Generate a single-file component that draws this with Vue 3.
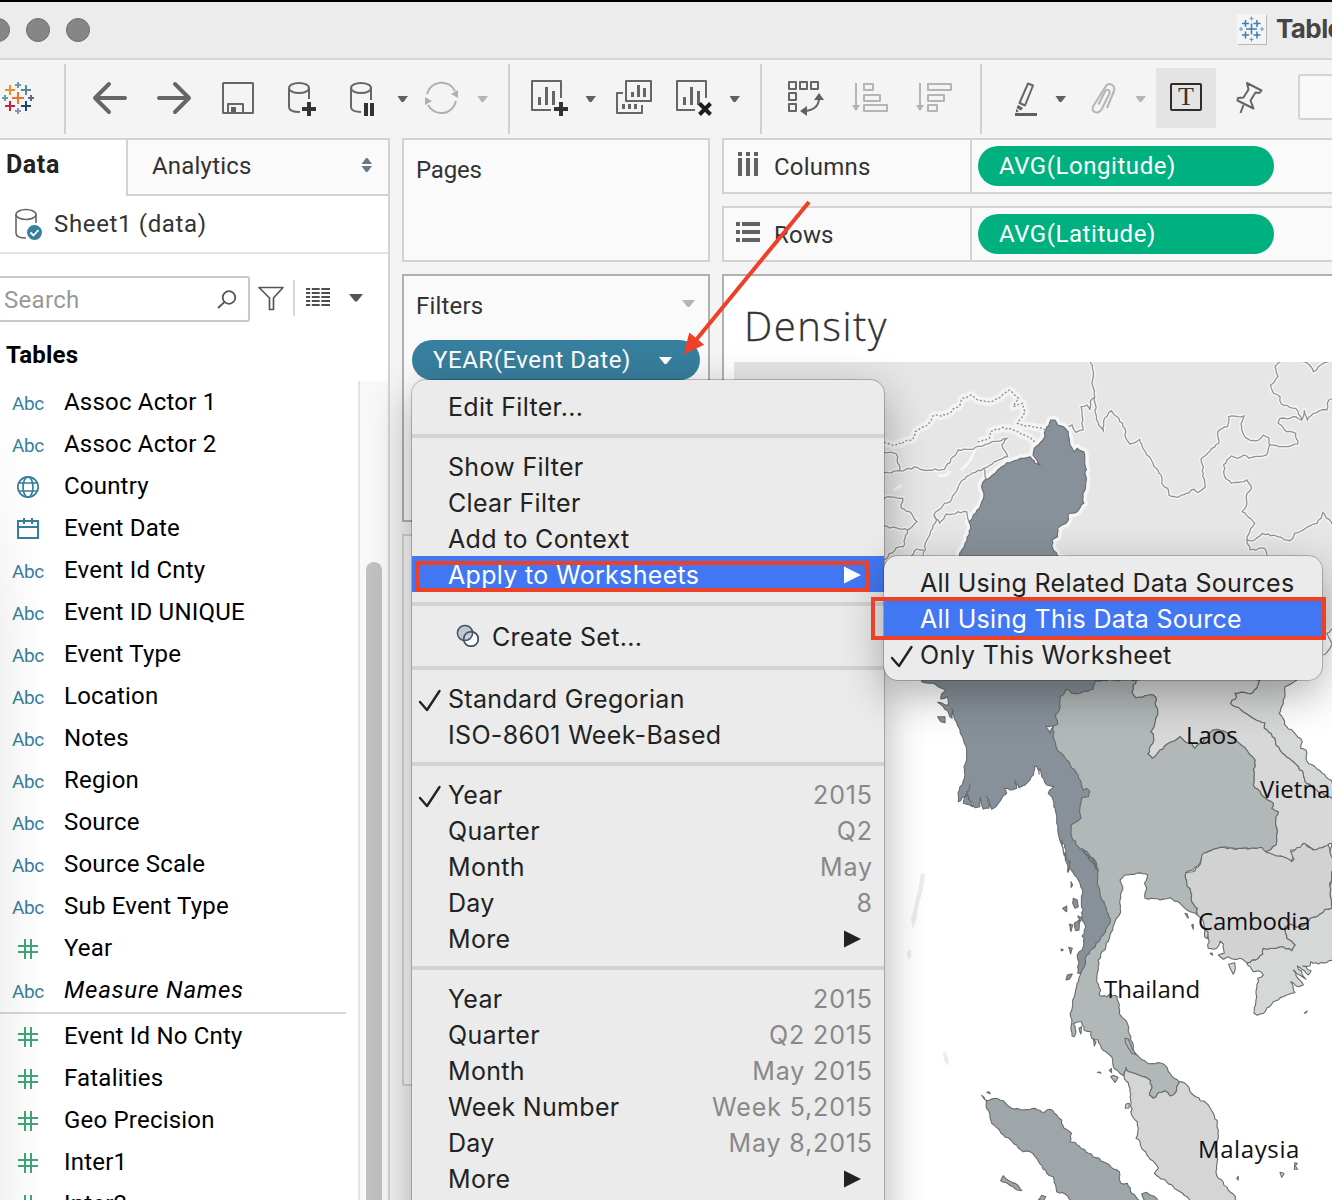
<script setup>
const fields = [
  ['abc', 'Assoc Actor 1'], ['abc', 'Assoc Actor 2'], ['globe', 'Country'], ['date', 'Event Date'],
  ['abc', 'Event Id Cnty'], ['abc', 'Event ID UNIQUE'], ['abc', 'Event Type'], ['abc', 'Location'],
  ['abc', 'Notes'], ['abc', 'Region'], ['abc', 'Source'], ['abc', 'Source Scale'],
  ['abc', 'Sub Event Type'], ['num', 'Year'], ['abc', 'Measure Names'],
  ['sep', ''],
  ['num', 'Event Id No Cnty'], ['num', 'Fatalities'], ['num', 'Geo Precision'], ['num', 'Inter1'], ['num', 'Inter2'],
]

const menu = [
  { t: 'Edit Filter...' }, { sep: true },
  { t: 'Show Filter' }, { t: 'Clear Filter' }, { t: 'Add to Context' }, { t: 'Apply to Worksheets', more: true, on: true },
  { sep: true }, { t: 'Create Set...', set: true }, { sep: true },
  { t: 'Standard Gregorian', check: true }, { t: 'ISO-8601 Week-Based' }, { sep: true },
  { t: 'Year', v: '2015', check: true }, { t: 'Quarter', v: 'Q2' }, { t: 'Month', v: 'May' }, { t: 'Day', v: '8' }, { t: 'More', more: true },
  { sep: true },
  { t: 'Year', v: '2015' }, { t: 'Quarter', v: 'Q2 2015' }, { t: 'Month', v: 'May 2015' },
  { t: 'Week Number', v: 'Week 5,2015' }, { t: 'Day', v: 'May 8,2015' }, { t: 'More', more: true },
]
const submenu = [
  { t: 'All Using Related Data Sources' },
  { t: 'All Using This Data Source', on: true },
  { t: 'Only This Worksheet', check: true },
]

// Survey sheets: each has its own origin and scale, projected to the window grid.
const sheet = (ox, oy, sx, sy) => (s) =>
  s.trim().split(/\s+/).map((p) => p.split(',').map(Number)).map(([x, y]) => [ox + x / sx, oy + y / sy])
const N = sheet(720, 200, 2.562, 3)
const M = sheet(870, 530, 3, 3)
const S = sheet(880, 840, 3, 3)

// Roughens a polyline so that coasts and borders look natural.
const noise = (x, y) => {
  const v = Math.sin(x * 12.9898 + y * 78.233) * 43758.5453
  return (v - Math.floor(v)) * 2 - 1
}
const rough = (pts, closed, amp = 0.13) => {
  const src = closed ? [...pts, pts[0]] : pts
  let d = `M${src[0][0].toFixed(1)} ${src[0][1].toFixed(1)}`
  for (let i = 1; i < src.length; i++) {
    let [a, b] = [src[i - 1], src[i]]
    const flip = a[0] > b[0] || (a[0] === b[0] && a[1] > b[1])
    const [p, q] = flip ? [b, a] : [a, b]
    const len = Math.hypot(q[0] - p[0], q[1] - p[1])
    const n = Math.max(1, Math.round(len / 3))
    const mids = []
    for (let k = 1; k < n; k++) {
      const x = p[0] + ((q[0] - p[0]) * k) / n
      const y = p[1] + ((q[1] - p[1]) * k) / n
      const w = noise(Math.round(x), Math.round(y)) * Math.min(1, len * amp)
      mids.push([x - ((q[1] - p[1]) / len) * w, y + ((q[0] - p[0]) / len) * w])
    }
    if (flip) mids.reverse()
    for (const m of [...mids, b]) d += `L${m[0].toFixed(1)} ${m[1].toFixed(1)}`
  }
  return closed ? d + 'Z' : d
}

const thaiLaos = '798,450 785,485 797,503 825,497 850,495 858,503 855,520 863,545 852,590 842,605 850,612 848,640 833,672 847,685 870,660 905,635 915,632 930,620 955,640 965,640 975,655 1000,635 1030,600 1060,603 1090,620 1110,642 1130,660 1155,690 1150,765 1180,800 1210,820 1205,835 1225,845 1217,870 1222,900 1218,945 1185,968'
const laosViet = '1400,1000 1375,980 1386,940 1345,960 1330,958 1300,940 1290,955 1262,960 1270,985 1262,997 1240,982 1200,975 1185,968'
const laosVietN = '1170,450 1160,475 1140,492 1118,487 1095,490 1100,500 1082,520 1120,545 1145,562 1185,578 1183,595 1215,625 1218,645 1245,675 1280,705 1300,730 1305,755 1340,780 1400,812'

const thailand = [
  ...M('590,440 675,450'), ...M(thaiLaos),
  ...M('1172,955 1150,955 1120,957 1095,955 1050,952 1005,968 990,1000 970,1020'),
  ...S('938,90 918,98 920,130 932,155 935,185 952,205 952,225 930,215 915,205 900,190 870,173 840,180 815,175 795,175 800,145 793,130 803,105 770,100 735,105 720,120 728,140 720,180 722,215 705,245 690,285 678,320 655,360 655,390 650,425 662,450 658,465 680,470 690,462 712,470 718,520 740,545 752,600 765,640 800,668 850,672 870,700 898,725 885,760 870,768 855,752 835,758 820,775 808,765 815,745 812,722 790,710 770,703 745,695 738,683 732,708 700,680 695,650 668,630 655,600 635,595 633,575 612,570 605,545 580,552 588,575 582,590 576,588 572,530 578,480 590,440 602,400 605,340 650,250 620,100 570,20'),
  ...M('590,900 580,780 540,650 560,500'),
]
const myanmar = [
  ...N('613,1067 628,1030 643,985 638,965 655,940 668,915 676,880 670,860 678,840 705,820 722,800 735,788 770,775 795,770 807,790 820,795 812,780 802,765 805,745 830,715 835,690 847,660 858,660 865,675 880,680 892,695 897,735 908,755 915,745 932,755 936,800 937,850 930,880 932,910 915,935 895,940 890,965 865,985 865,1010 850,1020 852,1045 864,1067'),
  ...M('600,100 690,300 705,450 675,452 670,478 630,490 605,490 588,478 583,490 570,500 568,540 556,555 563,583 545,588 528,588 540,610 550,590 550,615 560,655 590,690 625,735 630,750 640,780 650,775 660,785 655,800 635,803 630,830 633,865 620,875 603,885 605,920 625,950 640,965 665,985 682,1020'),
  ...S('605,25 640,55 655,90 652,130 662,170 672,185 680,215 691,245 670,285 640,325 620,345 615,375 602,400 593,400 597,370 592,345 610,320 612,295 606,288 617,262 602,235 610,210 604,190 608,160 600,130 595,120 570,85 563,97 567,70 560,60 558,30 545,0'),
  ...M('590,1000 583,970 575,945 567,920 560,880 560,860 552,820 545,800 535,790 552,770 530,765 515,740 510,715 507,733 500,710 493,708 490,735 475,755 465,765 447,773 435,750 440,775 420,780 403,775 410,790 400,797 385,820 375,832 365,838 350,800 357,835 340,838 330,800 330,830 315,833 290,790 308,830 280,820 300,762 290,790 272,812 265,815 268,780 285,735 282,710 290,690 290,665 283,640 270,600 255,570 245,535 247,565 220,530 203,517 235,525 232,500 212,507 215,492 228,483 205,470 190,460 175,460 155,455 200,300'),
]
const laos = [...M(thaiLaos), ...M(laosViet).reverse(), ...M('1400,1000 1400,812'), ...M(laosVietN).reverse(), ...M('1000,400')]
const vietnamN = [...M(laosVietN), ...M('1400,770 1350,722 1310,693 1308,660 1292,655 1297,635 1270,605 1250,590 1228,550 1240,520 1245,490 1245,470 1262,462 1280,450 1250,400 1190,400')]
const cambodia = S('1160,38 1190,48 1210,50 1235,65 1242,58 1232,35 1245,30 1275,10 1300,30 1345,15 1360,70 1350,140 1356,205 1335,208 1320,222 1290,235 1270,258 1250,262 1232,252 1215,262 1220,295 1245,315 1235,332 1210,320 1180,325 1150,325 1148,342 1135,355 1100,368 1080,355 1060,358 1045,350 1030,358 1015,345 1033,340 1030,312 1020,303 1010,325 985,325 985,295 975,270 968,240 952,225 952,205 935,185 932,155 920,130 918,98 938,95 955,80 970,40 1000,28 1035,23 1060,27 1120,24 1145,22')
const vietnamS = S('1365,70 1350,140 1356,205 1335,208 1320,222 1290,235 1270,258 1250,262 1232,252 1215,262 1220,295 1245,315 1235,332 1210,320 1180,325 1150,325 1148,342 1135,355 1100,368 1120,395 1135,392 1150,405 1133,415 1130,470 1122,520 1132,526 1150,520 1180,485 1210,470 1245,458 1240,445 1232,425 1255,440 1270,435 1240,390 1278,418 1252,378 1285,405 1293,392 1268,378 1290,378 1292,365 1315,372 1340,368 1365,355')
const malaysia = S('732,708 750,745 752,780 755,825 772,845 775,865 768,895 780,905 785,925 805,950 835,985 823,1000 835,1010 860,1025 880,1040 900,1055 940,1090 1070,1090 1060,1062 1045,1050 1010,1005 1012,940 1006,930 1015,890 1012,850 1000,820 985,795 940,765 915,730 898,725 885,760 870,768 855,752 835,758 820,775 808,765 815,745 812,722 790,710 770,703 745,695 738,683')
const sumatra = S('318,780 325,782 345,775 370,782 395,805 430,810 465,805 485,817 510,808 530,825 545,840 552,865 575,880 570,905 585,907 625,940 680,970 718,995 722,1030 742,1030 755,1060 790,1090 580,1090 555,1062 530,1055 520,1010 500,1000 470,955 450,935 430,935 410,915 370,885 335,850 330,825 320,805')

const countries = [
  ['#d8d8d8', laos], ['#d5d8d7', vietnamN], ['#b2b7b7', thailand], ['#d5d8d7', vietnamS],
  ['#d2d2d2', cambodia], ['#889199', myanmar], ['#d5d5d5', malaysia], ['#9ea6a9', sumatra],
].map(([fill, pts]) => ({ fill, d: rough(pts, true) }))

const islands = [
  ['#889199', M('203,560 225,560 225,578 213,575')],
  ['#889199', S('580,175 592,180 595,200 585,205 578,190')], ['#889199', S('583,250 598,240 597,270 587,272')],
  ['#889199', S('568,252 578,255 573,275')], ['#889199', S('548,205 560,198 560,215')],
  ['#889199', S('593,228 607,235 600,245')], ['#889199', S('573,125 578,135 573,142')],
  ['#889199', S('566,322 577,325 572,342')], ['#889199', S('562,405 577,402 568,418 558,420')],
  ['#889199', S('543,327 550,329 545,333')], ['#889199', S('562,70 570,62 566,95')],
  ['#b2b7b7', S('735,595 745,597 758,630 770,645 755,640 737,610')], ['#b2b7b7', S('597,565 605,560 603,582')],
  ['#b2b7b7', S('640,598 648,605 643,618')], ['#b2b7b7', S('692,710 700,706 714,712 705,727')],
  ['#b2b7b7', S('688,692 694,685 695,698')], ['#b2b7b7', S('652,697 660,696 663,700')],
  ['#d5d5d5', S('738,792 748,790 747,804 736,805')], ['#b2b7b7', S('915,220 922,222 925,235')],
  ['#b2b7b7', S('935,255 940,253 940,268')], ['#d2d2d2', S('975,270 984,275 982,296 974,290')],
  ['#d2d2d2', S('990,340 996,339 998,346')], ['#d5d8d7', S('1046,373 1064,368 1066,385 1060,403')],
  ['#9ea6a9', S('370,1007 380,1018 415,1037 425,1052 412,1050 385,1032 362,1022')],
  ['#9ea6a9', S('305,766 312,772 316,780')], ['#9ea6a9', S('320,757 326,755 331,761')],
  ['#9ea6a9', S('785,1062 800,1057 830,1075 835,1085 795,1085')], ['#9ea6a9', S('475,1080 485,1066 497,1070 490,1082')],
  ['#d5d5d5', S('1200,997 1212,1000 1205,1012')], ['#d5d5d5', S('1244,968 1252,970 1246,978 1253,988 1243,988')],
  ['#d5d5d5', S('1070,1015 1075,1009 1075,1020')], ['#d5d5d5', S('1273,520 1282,513 1278,519')],
].map(([fill, pts]) => ({ fill, d: rough(pts, true, 0.05) }))

const provinces = [
  N('950,480 957,520 953,550 960,590 962,640 970,675 982,692 985,655 1003,632 1018,650 1037,685 1040,715 1050,732 1075,718 1090,755 1105,780 1112,800 1130,825 1132,850 1147,865 1150,885 1170,892 1195,880 1215,868 1225,878 1243,862 1238,820 1233,775 1260,745 1278,730 1275,695 1300,680 1303,650 1343,648 1335,670 1342,705 1360,722 1380,720 1392,705 1405,712 1408,735 1400,765 1370,770 1355,775 1342,765 1325,775 1310,768 1290,795 1295,835 1310,850 1350,840 1362,865 1348,890 1350,910 1338,935 1370,970 1357,995 1350,1020 1370,1020 1390,1000 1425,1008 1460,1022 1472,1000 1500,985 1530,970 1545,937 1570,975'),
  N('893,680 902,675 912,697 930,690 928,650 925,620 940,615 948,630 952,598 960,592'),
  N('1435,485 1422,500 1430,530 1410,555 1418,580 1435,590 1438,612 1475,625 1490,660 1497,630 1505,660 1520,640 1540,630 1555,630 1560,600 1570,595'),
  N('1490,485 1510,495 1520,515 1545,490 1560,485'),
  N('1408,735 1440,740 1480,732 1475,700 1452,695 1430,670 1435,655 1460,655 1475,650 1490,660'),
  N('1350,1020 1358,1050 1395,1045 1402,1067'),
  N('410,820 460,812 505,802 520,810 575,808 610,750 640,748 690,730 735,715 722,735 737,770 710,782 675,805 640,825 615,850 590,905 575,910 548,945 563,970 580,942 632,935 638,965'),
  N('420,757 452,762 460,812'), N('675,805 683,838'), N('548,945 555,960 530,1020 520,1067'),
  N('410,905 430,890 468,895 465,925 490,940 505,965 480,990 420,978'),
  N('480,990 470,1040 450,1045 420,1080'), N('490,1067 505,1047 522,1050'),
  M('1400,290 1370,310 1386,340 1372,365 1360,375'),
].map((p) => rough(p, false))
const disputed = [
  N('420,727 450,735 495,718 500,695 535,670 545,648 580,645 615,615 618,600 643,585 660,600 690,605 720,590 742,570 765,595 752,620 775,610 782,635 762,670 800,680 835,688'),
  N('660,725 690,715 692,695 725,682 755,692 780,705 810,725'),
].map((p) => rough(p, false))
const northLand = N('0,480 1600,480 1600,1290 1500,1290 420,1290 420,1440 0,1440')
  .map((p) => p.join(' ')).join(' ')
</script>

<template>
  <div class="win">
    <header class="titlebar">
      <i class="dot first"></i><i class="dot"></i><i class="dot"></i>
      <div class="wtitle">
        <svg class="wicon" width="32" height="32" viewBox="1235 11 32 32">
          <path d="M1238 13h29v30h-29z" fill="#b9b9b9" /><path d="M1237 12h29v30h-29z" fill="#f4f4f4" />
          <g stroke="#3f7bb0" stroke-width="1.500"><path d="M1246 27h11M1251.500 21.500v11M1242 21.500h7M1245.500 18v7M1253.500 21.500h7M1257 18v7M1242 33h7M1245.500 29.500v7M1253.500 33h7M1257 29.500v7" /><path stroke-width="1.200" stroke="#6f9fc4" d="M1249.500 16.500h4M1251.500 14.500v4M1249.500 37.500h4M1251.500 35.500v4M1239 27h4M1241 25v4M1260 27h4M1262 25v4" /></g>
        </svg>
        <b>Tableau</b>
      </div>
    </header>

    <nav class="toolbar">
      <svg width="66" height="78" viewBox="0 60 66 78">
        <g fill="none" stroke-width="2">
          <path stroke="#e8762d" d="M12 98h12M18 92v12" /><path stroke="#eb912c" d="M5 90h10M10 85v10" />
          <path stroke="#59879b" d="M21 90h10M26 85v10" /><path stroke="#c8213b" d="M5 106h10M10 101v10" />
          <path stroke="#1f447e" d="M21 106h10M26 101v10" /><path stroke="#7099a6" d="M15 85h6M18 82v6M2 98h6M5 95v6" />
          <path stroke="#5c6692" d="M28 98h6M31 95v6" /><path stroke="#8a93b8" d="M15 111h6M18 108v6" />
        </g>
        <path d="M65 64v70" stroke="#d0d0d0" stroke-width="2" />
      </svg>
      <svg width="74" height="78" viewBox="66 60 74 78"><path class="ar" d="M125 98H95M109 84L95 98l14 14" /></svg>
      <svg width="66" height="78" viewBox="140 60 66 78"><path class="ar" d="M159 98h30M175 84l14 14-14 14" /></svg>
      <svg width="64" height="78" viewBox="206 60 64 78">
        <rect class="ln" x="223" y="83" width="30" height="30" rx=".5" /><path class="ln" d="M228 113v-9h15v9" /><path class="dk" d="M231 107h5v5h-5z" />
      </svg>
      <svg width="62" height="78" viewBox="270 60 62 78">
        <ellipse class="ln" cx="299" cy="88" rx="10" ry="5" /><path class="ln" d="M289 88v19c0 3 4 5 11 5M309 88v11" />
        <path d="M309 102v14M302 109h14" stroke="#333" stroke-width="4" />
      </svg>
      <svg width="56" height="78" viewBox="332 60 56 78">
        <ellipse class="ln" cx="361" cy="88" rx="10" ry="5" /><path class="ln" d="M351 88v19c0 3 4 5 10 5M371 88v12" />
        <path d="M366 103v13M372 103v13" stroke="#333" stroke-width="4" />
      </svg>
      <svg width="32" height="78" viewBox="388 60 32 78"><path class="dk" d="M397.500 96h10.500l-4.500 6h-2z" /></svg>
      <svg width="50" height="78" viewBox="420 60 50 78">
        <path d="M427 94a15 15 0 0 1 28-3M456 101a15 15 0 0 1-28 4" fill="none" stroke="#b0b0b0" stroke-width="2" />
        <path d="M458 90v8l-7-4zM425 97v8l7-4z" fill="#b0b0b0" />
      </svg>
      <svg width="40" height="78" viewBox="470 60 40 78"><path d="M477.500 96h10.500l-4.500 6h-2z" fill="#b5b5b5" /><path d="M509 64v70" stroke="#d0d0d0" stroke-width="2" /></svg>
      <svg width="66" height="78" viewBox="510 60 66 78">
        <path class="ln" d="M561 98V81h-29v29h19" /><path class="bars" d="M539.500 105v-8M546.500 105V87M553.500 105V91" />
        <path d="M561 102v14M554 109h14" stroke="#333" stroke-width="4" />
      </svg>
      <svg width="30" height="78" viewBox="576 60 30 78"><path class="dk" d="M585.500 96h10.500l-4.500 6h-2z" /></svg>
      <svg width="56" height="78" viewBox="606 60 56 78">
        <rect class="ln" x="626" y="81" width="25" height="20" /><path class="ln" d="M623 93h-6v20h25v-8" />
        <path class="bars" d="M632.500 97v-5M638.500 97V85M644.500 97v-9M623.500 109v-5M629.500 109v-5M635.500 109v-5" />
      </svg>
      <svg width="58" height="78" viewBox="662 60 58 78">
        <path class="ln" d="M706 98V81h-29v29h18" /><path class="bars" d="M684.500 105v-8M691.500 105V87M698.500 105V91" />
        <path d="M699.500 103.500l11 11M710.500 103.500l-11 11" stroke="#1d1d1d" stroke-width="4" />
      </svg>
      <svg width="42" height="78" viewBox="720 60 42 78"><path class="dk" d="M729.500 96h10.500l-4.500 6h-2z" /><path d="M761 64v70" stroke="#d0d0d0" stroke-width="2" /></svg>
      <svg width="76" height="78" viewBox="762 60 76 78">
        <path class="ln" d="M789 82h7v7h-7zM800 82h7v7h-7zM811 82h7v7h-7zM789 93h7v7h-7zM789 104h7v7h-7z" />
        <path class="ln" d="M819 98c0 8-5 12-14 13" /><path class="dk" d="M819 93l5 7h-10zM800 111l7-5v10z" />
      </svg>
      <svg width="64" height="78" viewBox="838 60 64 78">
        <path class="lt" d="M856 83v24M864 84h9v6h-9zM864 95h16v6h-16zM864 105h23v6h-23z" /><path d="M852 105h8l-4 6z" fill="#b0b0b0" />
      </svg>
      <svg width="80" height="78" viewBox="902 60 80 78">
        <path class="lt" d="M920 83v24M928 84h23v6h-23zM928 95h16v6h-16zM928 105h9v6h-9z" /><path d="M916 105h8l-4 6z" fill="#b0b0b0" />
        <path d="M981 64v70" stroke="#d0d0d0" stroke-width="2" />
      </svg>
      <svg width="66" height="78" viewBox="982 60 66 78">
        <path class="ln" d="M1028 83.500l5 2-8 20-5.500-2.500z" /><path class="dk" d="M1018 105l5 3-2 2.500-4.500-2.500zM1016 109l3 2-3 1.500zM1015 113h22v3h-22z" />
      </svg>
      <svg width="30" height="78" viewBox="1048 60 30 78"><path class="dk" d="M1055.500 96h10.500l-4.500 6h-2z" /></svg>
      <svg width="46" height="78" viewBox="1078 60 46 78">
        <path class="lt" d="M1107 108l7-17c1.500-7-6-9.500-9-3.500l-12 19c-2.500 6 5.500 8 8.500 3l8-16c1-4-3-5-4.500-2l-6.500 13" />
      </svg>
      <svg width="32" height="78" viewBox="1124 60 32 78"><path d="M1135.500 96h10.500l-4.500 6h-2z" fill="#b5b5b5" /></svg>
      <div class="tbtn"><span>T</span></div>
      <svg width="82" height="78" viewBox="1216 60 82 78">
        <path class="ln" d="M1247 83l14.500 7.500-2 2.500-4-.5-5 8 3 8-16-8 .5-2.500 5.500-.5 5-8z M1243.500 105l-3 8" />
      </svg>
      <div class="tfield"></div>
    </nav>

    <main class="body">
      <aside class="data">
        <div class="tabs">
          <b class="tab-a">Data</b>
          <div class="tab-b"><span>Analytics</span>
            <svg width="12" height="16" viewBox="0 0 12 16"><path d="M.5 7l4.500-6h1.500l4.500 6zM.5 9H11l-4.500 6H5z" fill="#687989" /></svg>
          </div>
        </div>
        <div class="source">
          <svg width="32" height="36" viewBox="12 206 32 36">
            <g fill="none" stroke="#666" stroke-width="1.600"><ellipse cx="26" cy="214.500" rx="10" ry="5" /><path d="M16 215v18c0 3 4 5 10 5M36 215v8" /></g>
            <circle cx="34.500" cy="232.500" r="7.500" fill="#377f9e" /><path d="M30.500 232.500l3 3 5-5.500" fill="none" stroke="#fff" stroke-width="1.800" />
          </svg>
          <span>Sheet1 (data)</span>
        </div>
        <div class="findbar">
          <div class="search"><span>Search</span>
            <svg width="22" height="22" viewBox="0 0 22 22"><g fill="none" stroke="#555" stroke-width="1.800"><circle cx="13" cy="8.500" r="6.300" /><path d="M8.500 13L2 19" /></g></svg>
          </div>
          <svg class="funnel" width="28" height="28" viewBox="0 0 28 28"><path d="M2 2.500h24l-9.500 10.500v11.500h-4V13z" fill="none" stroke="#555" stroke-width="1.700" stroke-linejoin="round" /></svg>
          <i class="vbar"></i>
          <svg class="rows" width="24" height="20" viewBox="0 0 24 20"><path d="M0 1h24M0 5h24M0 9h24M0 13h24M0 17h24" stroke="#4e4e4e" stroke-width="2" /><path d="M5 0v20M14.500 0v20" stroke="#fff" stroke-width="1.600" /></svg>
          <svg class="fcaret" width="16" height="10" viewBox="0 0 16 10"><path d="M1 1h14L9 8.500H7z" fill="#555" /></svg>
        </div>
        <h3>Tables</h3>
        <div class="listwrap">
          <ul>
            <li v-for="([k, t], i) in fields" :key="i" :class="{ sep: k === 'sep', it: t === 'Measure Names' }">
              <span v-if="k === 'abc'" class="abc">Abc</span>
              <svg v-else-if="k === 'globe'" width="24" height="24" viewBox="0 0 24 24"><g fill="none" stroke="#377f9e" stroke-width="1.700"><circle cx="12" cy="12" r="10.200" /><ellipse cx="12" cy="12" rx="5" ry="10.200" /><path d="M3 8h18M3 16h18" /></g></svg>
              <svg v-else-if="k === 'date'" width="24" height="24" viewBox="0 0 24 24"><path d="M2 4h20v17H2zM2 10h20M8 1v6M16 1v6" fill="none" stroke="#377f9e" stroke-width="2" /></svg>
              <svg v-else-if="k === 'num'" width="24" height="24" viewBox="0 0 24 24"><path d="M2 9h20M2 15h20M9 2v20M15 2v20" stroke="#3fa679" stroke-width="2" /></svg>
              <span v-if="t" class="name">{{ t }}</span>
            </li>
          </ul>
          <div class="track"><i class="thumb"></i></div>
        </div>
        <div class="edge"></div>
      </aside>

      <section class="cards">
        <div class="card pages">Pages</div>
        <div class="card filters">
          <div class="fhead">Filters<svg width="14" height="8" viewBox="0 0 14 8"><path d="M0 0h13L7.500 7h-2z" fill="#b5b5b5" /></svg></div>
          <div class="pill blue">YEAR(Event Date)<svg width="14" height="8" viewBox="0 0 14 8"><path d="M0 0h13L7.500 7h-2z" fill="#fff" /></svg></div>
        </div>
        <div class="card marks"></div>
      </section>

      <section class="sheet">
        <div class="shelf">
          <div class="sname">
            <svg width="26" height="24" viewBox="0 0 26 24"><path d="M4 0v4M4 6v18M12 0v4M12 6v18M20 0v4M20 6v18" stroke="#626262" stroke-width="4" /></svg>
            Columns
          </div>
          <div class="pill green">AVG(Longitude)</div>
        </div>
        <div class="shelf">
          <div class="sname">
            <svg width="26" height="24" viewBox="0 0 26 24"><path d="M0 4h4M6 4h18M0 12h4M6 12h18M0 20h4M6 20h18" stroke="#626262" stroke-width="4" /></svg>
            Rows
          </div>
          <div class="pill green">AVG(Latitude)</div>
        </div>
        <div class="view">
          <h1>Density</h1>
          <svg class="map" width="598" height="838" viewBox="734 362 598 838">
            <clipPath id="north"><path d="M734 362h598v270H734z" /></clipPath>
            <polygon :points="northLand" fill="#e6e6e6" />
            <g fill="none" stroke="#f6f6f6" stroke-width="6" stroke-linejoin="round" clip-path="url(#north)">
              <path v-for="(d, i) in disputed" :key="i" :d="d" stroke-width="8" stroke="#f3f3f3" /><path v-for="(d, i) in provinces" :key="i" :d="d" stroke-width="4" />
              <path :d="countries[5].d" stroke-width="8" />
            </g>
            <path d="M961 470q10-8 14-20M938 475q8 3 12-4M894 490l8-5" fill="none" stroke="#f6f6f6" stroke-width="3" />
            <g fill="none" stroke="#929292" stroke-width="1.300"><path v-for="(d, i) in provinces" :key="i" :d="d" /></g>
            <g fill="none" stroke="#8a8a8a" stroke-width="1.300" stroke-dasharray="2 2"><path v-for="(d, i) in disputed" :key="i" :d="d" /></g>
            <g stroke="#666c6e" stroke-width="1.100" stroke-linejoin="round">
              <path v-for="(c, i) in countries" :key="i" :d="c.d" :fill="c.fill" />
              <path v-for="(c, i) in islands" :key="'i' + i" :d="c.d" :fill="c.fill" />
            </g>
            <g fill="#ececec"><path d="M921 873l4 2-2 14-4 14-2 14-4 12-2-10 4-16 3-12zM907 952l4-3 0 8-3 3zM943 1053l3-1 3 9-2 5-3-6z" /></g>
            <g class="lbl"><text x="1186" y="744">Laos</text><text x="1260" y="798">Vietnam</text><text x="1198" y="930" class="tight">Cambodia</text><text x="1104" y="998">Thailand</text><text x="1198" y="1158" class="wide">Malaysia</text></g>
          </svg>
        </div>
      </section>
    </main>

    <div class="menu main">
      <template v-for="(m, i) in menu" :key="i">
        <hr v-if="m.sep" />
        <div v-else class="mi" :class="{ on: m.on, set: m.set }">
          <svg v-if="m.check" class="chk" width="24" height="24" viewBox="0 0 24 24"><path d="M2 13l7 8L21.500 2" fill="none" stroke="#222" stroke-width="2.400" stroke-linecap="round" stroke-linejoin="round" /></svg>
          <svg v-if="m.set" class="ven" width="24" height="24" viewBox="0 0 24 24"><g stroke="#42526b" stroke-width="1.500"><circle cx="15" cy="15" r="7.300" fill="#fff" /><circle cx="9" cy="9" r="7.600" fill="#aab4be" fill-opacity=".65" /><circle cx="15" cy="15" r="7.300" fill="none" /></g></svg>
          <span>{{ m.t }}</span>
          <em v-if="m.v">{{ m.v }}</em>
          <svg v-if="m.more" class="more" width="18" height="18" viewBox="0 0 18 18"><path d="M1 .5L18 9 1 17.500z" fill="currentColor" /></svg>
        </div>
      </template>
    </div>
    <div class="menu sub">
      <div v-for="m in submenu" :key="m.t" class="mi" :class="{ on: m.on }">
        <svg v-if="m.check" class="chk" width="24" height="24" viewBox="0 0 24 24"><path d="M2 13l7 8L21.500 2" fill="none" stroke="#222" stroke-width="2.400" stroke-linecap="round" stroke-linejoin="round" /></svg>
        <span>{{ m.t }}</span>
      </div>
    </div>
    <div class="mark m1"></div>
    <div class="mark m2"></div>
    <svg class="pointer" width="140" height="170" viewBox="680 195 140 170"><path d="M809 202L696 340" stroke="#ee4027" stroke-width="4" /><path d="M683.700 354.500l5.600-22 14.900 12.300z" fill="#ee4027" /></svg>
  </div>
</template>

<style>
body { overflow: hidden; }
</style>

<style scoped>
* { box-sizing: border-box; }
.win { position: relative; width: 1332px; height: 1200px; overflow: hidden; display: flex; flex-direction: column; background: #f4f4f4; color: #333; font: 24px/30px Roboto, "Liberation Sans", sans-serif; }
svg { display: block; flex: none; }
.titlebar { height: 60px; flex: none; display: flex; align-items: center; gap: 16px; background: #ececec; border-top: 2px solid #000; border-bottom: 2px solid #d6d6d6; }
.dot { width: 24px; height: 24px; flex: none; border-radius: 50%; background: #868686; border: 1px solid #6f6f6f; }
.first { margin-left: -14px; }
.wtitle { margin-left: 1129px; display: flex; align-items: center; gap: 9px; font-size: 26px; color: #454545; font-family: Inter, sans-serif; letter-spacing: -.6px; }
.wtitle b { margin-top: -2px; }
.wicon { margin-top: -3px; }
.toolbar { height: 78px; flex: none; display: flex; }
.ar { fill: none; stroke: #666; stroke-width: 4; stroke-linecap: round; stroke-linejoin: round; }
.ln { fill: none; stroke: #666; stroke-width: 2; stroke-linejoin: round; }
.lt { fill: none; stroke: #b5b5b5; stroke-width: 2; stroke-linejoin: round; }
.dk { fill: #606060; }
.bars { stroke: #666; stroke-width: 3; }
.tbtn { flex: none; width: 60px; height: 60px; margin-top: 8px; background: #e4e4e4; display: flex; align-items: center; justify-content: center; }
.tbtn span { width: 32px; height: 28px; margin-bottom: 2px; border: 2px solid #2d2d2d; border-radius: 2px; font: 26px/24px "Liberation Serif", serif; text-align: center; color: #333; }
.tfield { flex: none; width: 60px; height: 46px; margin-top: 14px; border: 2px solid #d3d3d3; border-radius: 3px; background: #f8f8f8; }
.body { flex: 1; min-height: 0; display: flex; }

.data { position: relative; width: 390px; flex: none; display: flex; flex-direction: column; background: #fff; border-top: 2px solid #d3d3d3; border-right: 2px solid #d3d3d3; }
.tabs { display: flex; height: 56px; flex: none; }
.tab-a { width: 126px; padding: 10px 0 0 6px; color: #222; font-size: 25px; letter-spacing: .6px; }
.tab-b { flex: 1; display: flex; justify-content: space-between; padding: 11px 14px 0 24px; background: #fafafa; border-left: 2px solid #d3d3d3; border-bottom: 2px solid #d3d3d3; letter-spacing: .2px; }
.tab-b svg { margin-top: 6px; margin-right: 1px; }
.source { height: 58px; flex: none; display: flex; padding: 10px 0 0 12px; gap: 10px; border-bottom: 2px solid #e2e2e2; letter-spacing: .65px; }
.source span { margin-top: 3px; }
.findbar { display: flex; align-items: center; height: 46px; flex: none; margin-top: 22px; }
.search { width: 252px; height: 46px; margin-left: -2px; padding: 2px 10px 0 4px; border: 2px solid #c9c9c9; border-radius: 3px; display: flex; align-items: center; justify-content: space-between; color: #999; letter-spacing: .3px; }
.search svg { margin-top: -1px; }
.funnel { margin-left: 7px; margin-right: 8px; }
.vbar { width: 2px; height: 36px; margin: 0 11px 2px 0; background: #d8d8d8; }
.rows { margin-bottom: 2px; }
.fcaret { margin-left: 18px; margin-bottom: 2px; }
h3 { margin: 18px 0 10px 6px; font-size: 24px; line-height: 31px; color: #000; letter-spacing: .2px; }
.listwrap { flex: 1; min-height: 0; display: flex; overflow: hidden; }
ul { flex: 1; margin: 0; padding: 0; list-style: none; color: #000; letter-spacing: .2px; }
li { height: 42px; display: flex; align-items: center; padding-left: 12px; }
li svg { margin: 1px 0 0 4px; width: 24px; }
.abc { width: 32px; margin-top: 3px; color: #377f9e; font-size: 19px; letter-spacing: -.4px; }
.name { margin-left: 20px; }
li svg + .name { margin-left: 24px; }
.it .name { font-style: italic; letter-spacing: .75px; }
li.sep { height: 2px; margin: 1px 12px 1px 0; background: #d9d9d9; }
.track { width: 30px; background: #f8f8f8; border-left: 2px solid #e3e3e3; padding: 181px 6px 0; }
.thumb { display: block; width: 16px; height: 700px; border-radius: 8px 8px 0 0; background: #c1c1c1; }
.edge { position: absolute; left: 0; bottom: 0; width: 44px; height: 800px; background: linear-gradient(90deg, rgba(0,0,0,.05), rgba(0,0,0,0)); mask-image: linear-gradient(transparent, #000 30%); }

.cards { width: 308px; margin-left: 12px; flex: none; display: flex; flex-direction: column; gap: 12px; }
.card { flex: none; background: #fafafa; border: 2px solid #d3d3d3; }
.pages { height: 124px; padding: 15px 12px; letter-spacing: -.2px; }
.filters { height: 248px; border-color: #b0b0b0; }
.fhead { height: 64px; display: flex; justify-content: space-between; padding: 15px 12px 0; letter-spacing: .2px; }
.fhead svg { margin-top: 9px; }
.marks { height: 552px; }
.pill { height: 40px; border-radius: 20px; color: #fff; line-height: 40px; padding-left: 21px; letter-spacing: .55px; }
.blue { width: 288px; margin-left: 8px; background: #377f9e; display: flex; justify-content: space-between; padding-right: 27px; }
.blue svg { margin-top: 17px; }
.green { width: 296px; margin: 6px; background: #00b180; }

.sheet { flex: 1; min-width: 0; margin-left: 12px; display: flex; flex-direction: column; gap: 12px; }
.shelf { height: 56px; flex: none; display: flex; background: #fafafa; border: 2px solid #d3d3d3; border-right: 0; }
.sname { width: 248px; display: flex; gap: 12px; padding: 12px 0 0 12px; border-right: 2px solid #d3d3d3; line-height: 31px; letter-spacing: .2px; }
.view { flex: 1; background: #fff; border: 2px solid #b0b0b0; border-width: 2px 0 0 2px; }
h1 { margin: 0; height: 86px; padding: 24px 0 0 20px; font: 300 40px/52px "Open Sans", sans-serif; letter-spacing: 1.5px; -webkit-text-stroke: .3px #333; }
.map { margin-left: 10px; }
.lbl { font: 24px "Open Sans", sans-serif; fill: #111; }
.tight { letter-spacing: -.2px; }
.wide { letter-spacing: .6px; }

.menu { position: absolute; background: #ebebeb; border-radius: 14px; padding: 8px 0; color: #222; font: 25px/38px Inter, sans-serif; letter-spacing: .32px; box-shadow: 0 0 0 1px rgba(0,0,0,.22), 0 14px 44px rgba(0,0,0,.32); }
.main { left: 412px; top: 380px; width: 472px; height: 860px; }
.sub { left: 884px; top: 556px; width: 438px; height: 124px; }
hr { height: 4px; margin: 10px 0; border: 0; background: #d3d3d3; }
.mi { position: relative; height: 36px; padding: 0 12px 0 36px; display: flex; justify-content: space-between; white-space: nowrap; }
.mi.set { height: 40px; line-height: 42px; padding-left: 44px; justify-content: flex-start; gap: 12px; }
.ven { margin-top: 8px; }
.mi em { font-style: normal; color: #888; letter-spacing: .85px; margin-right: -.85px; }
.chk { position: absolute; left: 6px; top: 9px; }
.more { margin: 10px 11px 0 0; }
.on { background: #4277f4; color: #fff; }
.mark { position: absolute; border: 4px solid #ee4027; }
.m1 { left: 415px; top: 561px; width: 455px; height: 31px; }
.m2 { left: 871px; top: 597px; width: 455px; height: 43px; }
.pointer { position: absolute; left: 680px; top: 195px; }
</style>
